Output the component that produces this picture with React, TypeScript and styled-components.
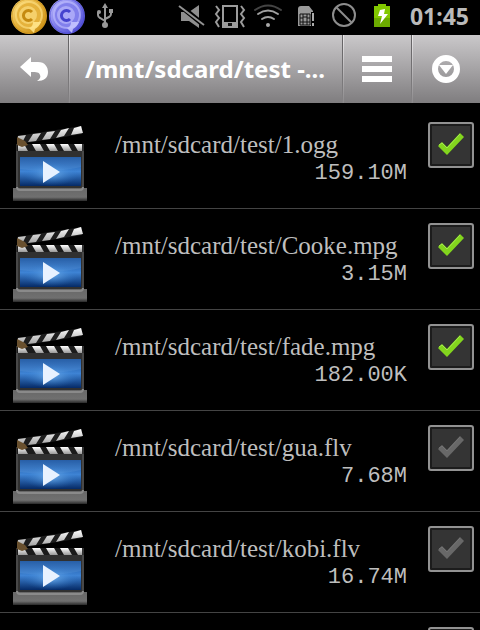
import React, { useId, useState } from "react";
import styled, { createGlobalStyle } from "styled-components";

const GlobalStyle = createGlobalStyle`
  * { box-sizing: border-box; }
  body { margin: 0; background: #000; }
`;

const Screen = styled.div`
  height: 100vh;
  overflow: hidden;
  display: flex;
  flex-direction: column;
  background: #000;
  font-family: "Noto Sans", "Open Sans", sans-serif;
`;

const StatusBar = styled.header`
  flex: none;
  display: flex;
  align-items: flex-start;
  justify-content: space-between;
  height: 35px;
  padding: 0 11px 0 10px;
`;

const StatusGroup = styled.div`
  display: flex;
  align-items: flex-start;
`;

const Slot = styled.svg`
  display: block;
  width: 38px;
  height: 36px;
`;

const Clock = styled.time`
  margin-left: 9px;
  color: #bababa;
  font-size: 23px;
  line-height: 32px;
  font-weight: 700;
`;

const TitleBar = styled.nav`
  flex: none;
  display: grid;
  grid-template-columns: 69px minmax(0, 1fr) 69px 69px;
  height: 68px;
  background: linear-gradient(#cac8ca, #a5a3a5 50%, #7f7d7f);
`;

const BarButton = styled.button<{ $divider?: "left" | "right" }>`
  display: flex;
  align-items: center;
  justify-content: center;
  padding: 0;
  border: 0 solid;
  border-image: linear-gradient(#626062, #858385) 1;
  border-left-width: ${(p) => (p.$divider === "left" ? "1px" : "0")};
  border-right-width: ${(p) => (p.$divider === "right" ? "1px" : "0")};
  background: linear-gradient(#eceaec, #8b898b) left / ${(p) => (p.$divider === "left" ? "1px" : "0")} 100% no-repeat;
  color: #fff;
  cursor: pointer;
`;

const Title = styled.h1`
  margin: 0;
  padding: 0 15px;
  border-left: 1px solid;
  border-image: linear-gradient(#eceaec, #8b898b) 1;
  overflow: hidden;
  white-space: nowrap;
  color: #fff;
  font-size: 24px;
  line-height: 68px;
  font-weight: 700;
`;

const FileList = styled.ul`
  flex: 1;
  min-height: 0;
  margin: 0;
  padding: 5px 0 0;
  overflow: hidden;
  list-style: none;
`;

const FileRow = styled.li`
  display: grid;
  grid-template-columns: 76px minmax(0, 1fr) 46px;
  column-gap: 20px;
  height: 101px;
  padding: 14px 6px 0 12px;
  border-bottom: 1px solid #444;
`;

const FileInfo = styled.label`
  display: flex;
  flex-direction: column;
  padding: 8px 1px 0 7px;
`;

const FileName = styled.span`
  color: #bebebe;
  font-family: "Liberation Serif", serif;
  font-size: 25px;
  line-height: 29px;
  white-space: nowrap;
`;

const FileSize = styled.span`
  color: #bebebe;
  font-family: "Liberation Mono", monospace;
  font-size: 22px;
  line-height: 30px;
  text-align: right;
`;

const Thumb = styled.svg`
  display: block;
  width: 76px;
  height: 80px;
`;

const CheckBox = styled.span`
  display: grid;
  width: 46px;
  height: 46px;
  border: 2px solid #929292;
  border-radius: 3px;
  background: #343434;
  box-shadow: inset 0 0 0 2px #1c1c1c;

  > * { grid-area: 1 / 1; }
`;

const CheckInput = styled.input`
  appearance: none;
  width: 42px;
  height: 42px;
  margin: 0;
  cursor: pointer;
`;

const Tick = styled.svg`
  width: 42px;
  height: 42px;
  pointer-events: none;
`;

function CoinIcon({ light, mid, dark }: { light: string; mid: string; dark: string }) {
  const id = useId();
  return (
    <Slot viewBox="0 0 38 36" aria-hidden="true">
      <defs>
        <linearGradient id={id} x1="0" y1="0" x2="1" y2="1">
          <stop offset="0" stopColor={light} />
          <stop offset=".45" stopColor={mid} />
          <stop offset="1" stopColor={dark} />
        </linearGradient>
      </defs>
      <circle cx="19" cy="16" r="18" fill={`url(#${id})`} />
      <circle cx="19" cy="16" r="17" fill="none" stroke={dark} strokeWidth="1" opacity=".6" />
      <circle cx="19" cy="15" r="13" fill={mid} stroke={light} strokeWidth="2" strokeOpacity=".6" />
      <path d="M19 28q4-1 4-6h8q-2 5-6 7l-1 4z" fill={light} opacity=".9" />
      <circle cx="18" cy="15" r="9" fill={light} opacity=".6" />
      <path d="M22 12a5 5 0 1 0 0 7" fill="none" stroke={dark} strokeWidth="3" />
    </Slot>
  );
}

function UsbIcon() {
  return (
    <Slot viewBox="0 0 38 36" aria-hidden="true" stroke="#999" fill="none" strokeWidth="2">
      <path d="M19 24V6M12 12v3q0 2 2 3l5 3M25 12v2q0 2-2 3l-4 2" />
      <path d="m19 3 3 5h-6z" fill="#999" stroke="none" />
      <circle cx="19" cy="25" r="3" fill="#999" stroke="none" />
      <circle cx="13" cy="12" r="2" fill="#999" stroke="none" />
      <path d="M23 9h4v4h-4z" fill="#999" stroke="none" />
    </Slot>
  );
}

function MuteIcon() {
  return (
    <Slot viewBox="0 0 38 36" aria-hidden="true">
      <path d="M8 12h8L26 5v23l-10-7H8z" fill="#8f8f8f" />
      <path d="M5 4 32 26" stroke="#000" strokeWidth="5" />
      <path d="M6 6 31 25" stroke="#929292" strokeWidth="2" />
    </Slot>
  );
}

function VibrateIcon() {
  return (
    <Slot viewBox="0 0 38 36" aria-hidden="true" fill="none" stroke="#9c9c9c" strokeWidth="2">
      <path d="M12 6h14v21H12z" />
      <path d="M12 22h14v5H12z" fill="#9c9c9c" stroke="none" />
      <path d="M17 23h4v3h-4z" fill="#111" stroke="none" />
      <path d="m5 6 3 4-3 4 3 4-3 4 3 5M30 6l3 4-3 4 3 4-3 4 3 5" />
    </Slot>
  );
}

function WifiIcon() {
  return (
    <Slot viewBox="0 0 38 36" aria-hidden="true" fill="none" strokeWidth="2" strokeLinecap="round">
      <path d="M6 10Q19 1 32 10" stroke="#444" />
      <path d="M9 14Q19 7 29 14M13 19Q19 15 25 19" stroke="#a0a0a0" />
      <circle cx="19" cy="25" r="2" fill="#aaa" />
    </Slot>
  );
}

function SimIcon() {
  return (
    <Slot viewBox="0 0 38 36" aria-hidden="true">
      <path d="M11 9q0-3 3-3h8l4 5v15H11z" fill="#999" />
      <path d="M13 14h10v11H13zM16 14v11M20 14v11M13 18h3M20 18h3M13 22h3M20 22h3M16 17h4M16 22h4" fill="none" stroke="#111" />
      <path d="M24 12h4v16h-4z" fill="#000" />
      <path d="M25 13h2v8h-2zM25 23h2v3h-2z" fill="#aaa" />
    </Slot>
  );
}

function BlockedIcon() {
  return (
    <Slot viewBox="0 0 38 36" aria-hidden="true" fill="none" stroke="#8d8d8d" strokeWidth="2">
      <circle cx="19" cy="15" r="11" />
      <path d="m11 7 16 16" />
    </Slot>
  );
}

function BatteryIcon() {
  return (
    <Slot viewBox="0 0 38 36" aria-hidden="true">
      <path d="M15 4h8v2h4v21H11V6h4z" fill="#82c800" />
      <path d="M11 18h16v9H11z" fill="#6cab00" />
      <path d="m17 10 5-1-1 5h4l-8 10 2-8h-4z" fill="#fff" />
    </Slot>
  );
}

function ClapperThumb() {
  const id = useId();
  return (
    <Thumb viewBox="0 0 76 80" aria-hidden="true">
      <defs>
        <linearGradient id={`${id}s`} x1="0" y1="0" x2="0" y2="1">
          <stop offset="0" stopColor="#174f9b" />
          <stop offset=".5" stopColor="#3e83d4" />
          <stop offset="1" stopColor="#052a66" />
        </linearGradient>
        <radialGradient id={`${id}g`}>
          <stop offset="0" stopColor="#7dbdf8" stopOpacity=".8" />
          <stop offset="1" stopColor="#2b75c8" stopOpacity="0" />
        </radialGradient>
        <linearGradient id={`${id}b`} x1="0" y1="0" x2="0" y2="1">
          <stop offset="0" stopColor="#686868" />
          <stop offset=".7" stopColor="#707070" />
          <stop offset="1" stopColor="#292929" />
        </linearGradient>
        <linearGradient id={`${id}w`} x1="0" y1="0" x2="0" y2="1">
          <stop offset="0" stopColor="#fff" />
          <stop offset="1" stopColor="#999" />
        </linearGradient>
      </defs>
      <path d="M5 14 70 4v8L8 22z" fill="#1d1d1d" />
      <path d="m6 14 8-1-4 8-4 1zM21 12l8-1-5 8-8 1zM35 10l8-1-5 8-8 1zM49 8l8-2-5 8-8 2zM62 6l7-2 2 7-12 2z" fill={`url(#${id}w)`} />
      <path d="M4 22h68v44H4z" fill="#303030" />
      <path d="M5 22h65v7H5z" fill="#1b1b1b" />
      <path d="M6 22h6l4 7H6zM20 22h8l4 7h-8zM34 22h8l4 7h-8zM48 22h8l4 7h-8zM62 22h8v7h-4z" fill={`url(#${id}w)`} />
      <path d="m5 15 8 4 3 4-6 2-5-2z" fill="#69502e" />
      <path d="M5 29v38h66V29" fill="none" stroke="#484848" strokeWidth="2" />
      <path d="M8 35h61v29H8z" fill={`url(#${id}s)`} />
      <path d="M8 35h61v10Q39 52 8 47z" fill="#8dbcf0" opacity=".14" />
      <ellipse cx="39" cy="52" rx="28" ry="12" fill={`url(#${id}g)`} />
      <path d="m31 39 17 11-17 11z" fill="#e8f2ff" />
      <path d="M1 66h74v13H1z" fill={`url(#${id}b)`} />
      <path d="M5 65q0 3 3 3h60q3 0 3-3" fill="none" stroke="#8a8a8a" strokeWidth="2" />
    </Thumb>
  );
}

interface FileEntry {
  name?: string;
  size?: string;
  selected: boolean;
}

const files: FileEntry[] = [
  { name: "/mnt/sdcard/test/1.ogg", size: "159.10M", selected: true },
  { name: "/mnt/sdcard/test/Cooke.mpg", size: "3.15M", selected: true },
  { name: "/mnt/sdcard/test/fade.mpg", size: "182.00K", selected: true },
  { name: "/mnt/sdcard/test/gua.flv", size: "7.68M", selected: false },
  { name: "/mnt/sdcard/test/kobi.flv", size: "16.74M", selected: false },
  { selected: false },
];

function FileItem({ file }: { file: FileEntry }) {
  const id = useId();
  const [selected, setSelected] = useState(file.selected);
  return (
    <FileRow>
      <ClapperThumb />
      <FileInfo htmlFor={id}>
        <FileName>{file.name}</FileName>
        <FileSize>{file.size}</FileSize>
      </FileInfo>
      <CheckBox>
        <CheckInput id={id} type="checkbox" checked={selected} onChange={(e) => setSelected(e.target.checked)} />
        <Tick viewBox="0 0 42 42" aria-hidden="true">
          <path d="m8 22 4-4 5 5L30 9l4 4-17 18z" fill={selected ? "#83d51e" : "#686868"} />
          <path d="m9 21 3-2 5 5L30 10" fill="none" stroke={selected ? "#a4ec4b" : "#747474"} />
        </Tick>
      </CheckBox>
    </FileRow>
  );
}

export default function App() {
  return (
    <Screen>
      <GlobalStyle />
      <StatusBar>
        <StatusGroup>
          <CoinIcon light="#ffe48a" mid="#e5b23c" dark="#c58a10" />
          <CoinIcon light="#c4c3ff" mid="#8280ec" dark="#4543cf" />
          <UsbIcon />
        </StatusGroup>
        <StatusGroup>
          <MuteIcon />
          <VibrateIcon />
          <WifiIcon />
          <SimIcon />
          <BlockedIcon />
          <BatteryIcon />
          <Clock>01:45</Clock>
        </StatusGroup>
      </StatusBar>
      <TitleBar>
        <BarButton $divider="right" aria-label="Back">
          <svg width="30" height="26" viewBox="0 0 30 26" aria-hidden="true">
            <path d="M1 11 12 1v5h7c7 0 10 5 10 10 0 6-4 9-11 9 3-2 4-4 3-6-1-3-3-3-9-3v5z" fill="#fff" />
          </svg>
        </BarButton>
        <Title>/mnt/sdcard/test -...</Title>
        <BarButton $divider="left" aria-label="Menu">
          <svg width="30" height="26" viewBox="0 0 30 26" aria-hidden="true">
            <path d="M0 0h30v6H0zM0 10h30v6H0zM0 20h30v6H0z" fill="#fff" />
          </svg>
        </BarButton>
        <BarButton $divider="left" aria-label="More options">
          <svg width="30" height="30" viewBox="0 0 30 30" aria-hidden="true">
            <circle cx="15" cy="15" r="11" fill="none" stroke="#fff" strokeWidth="6" />
            <path d="M8 11h14l-7 9z" fill="#fff" />
          </svg>
        </BarButton>
      </TitleBar>
      <FileList>
        {files.map((file, i) => (
          <FileItem key={i} file={file} />
        ))}
      </FileList>
    </Screen>
  );
}
